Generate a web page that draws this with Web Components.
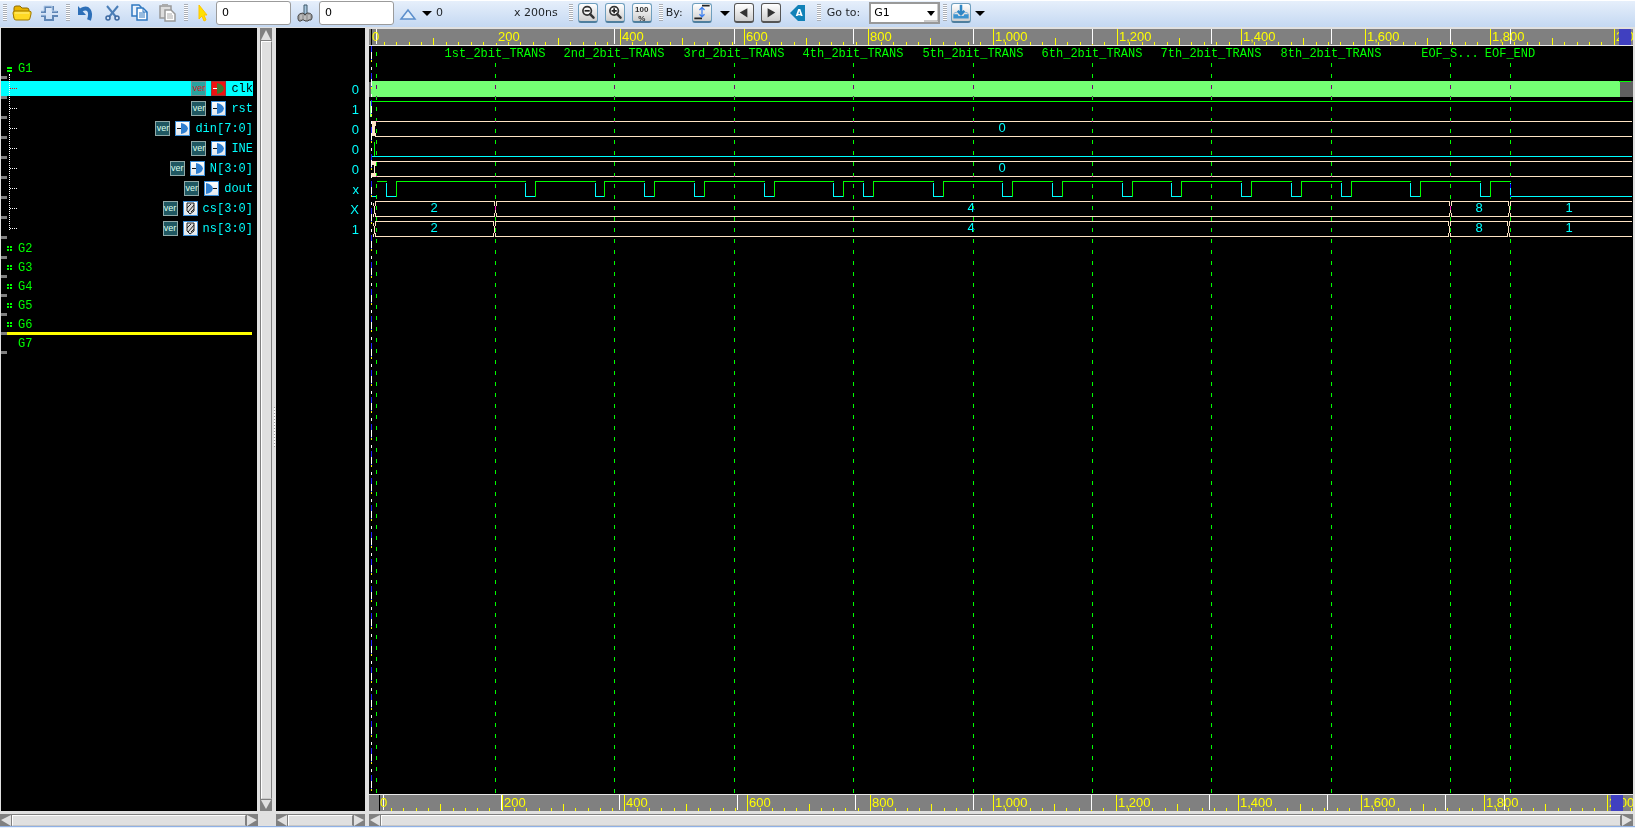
<!DOCTYPE html>
<html lang="en">
<head>
<meta charset="utf-8">
<title>Waveform viewer</title>
<style>
  html, body { margin: 0; height: 100%; }
  body { background: #e0e0e0; font: 11px/16px "DejaVu Sans", sans-serif; color: #1e2226; overflow: hidden; }
</style>
</head>
<body>
<wave-app></wave-app>

<script>
const define = (name, css, html, setup) => {
  customElements.define(name, class extends HTMLElement {
    constructor() {
      super();
      this.attachShadow({ mode: 'open' });
    }
    connectedCallback() {
      const body = typeof html === 'function' ? html(this) : html;
      this.shadowRoot.innerHTML = `<style>*{box-sizing:border-box}${css}</style>${body}`;
      if (setup) setup(this, this.shadowRoot);
    }
  });
};

/* ---------- toolbar icons ---------- */
const glass = extra => `<circle cx="9" cy="8" r="5" fill="#fff" fill-opacity=".6" stroke="#333" stroke-width="2"/><path d="M12.500 12l4 4" stroke="#333" stroke-width="3" stroke-linecap="round"/>${extra}`;
const icons = {
  folder: '<path d="M2 15V5q0-2 2-2h4l2 2h5q2 0 2 2v2" fill="#e8b400" stroke="#8f6a00"/><path d="M1 10q0-2 2-2h14q3 0 2 3l-1 4q0 2-2 2H4q-2 0-2-2z" fill="#ffd924" stroke="#a07800"/><path d="M3 10h14" stroke="#fff08a"/>',
  pulse: '<path d="M2 9h4V4h8v5h5M2 13h4v4h8v-4h5" fill="none" stroke="#5f86b6" stroke-width="2"/><path d="M2 8h3V3h8v5h5M2 12h5" fill="none" stroke="#b9d0ec"/>',
  undo: '<path d="M5 7c7-4 11 1 8 10" fill="none" stroke="#2d6fb8" stroke-width="4"/><path d="M2 3v9h8z" fill="#2d6fb8"/>',
  cut: '<path d="M4 3l9 11M15 3L6 14" stroke="#4c7fb8" stroke-width="2"/><circle cx="5" cy="15" r="2" fill="none" stroke="#3c68a0" stroke-width="1.500"/><circle cx="14" cy="15" r="2" fill="none" stroke="#3c68a0" stroke-width="1.500"/>',
  copy: '<path d="M2 2h7l2 2v9H2z" fill="#e9f2fc" stroke="#2f78c0" stroke-width="1.500"/><path d="M7 5h6l4 4v8H7z" fill="#fff" stroke="#2f78c0" stroke-width="1.500"/><path d="M13 5v4h4M9 10h6M9 12h6M9 14h6" fill="none" stroke="#2f78c0"/>',
  paste: '<path d="M3 3h11v12H3z" fill="#ddd" stroke="#999" stroke-width="1.500"/><path d="M5 1h6v3H5z" fill="#aaa"/><path d="M8 7h6l4 4v7H8z" fill="#fff" stroke="#999" stroke-width="1.500"/><path d="M10 11h5M10 13h6M10 15h6" stroke="#aaa"/>',
  pointer: '<path d="M7 2v14l3-3 2 5 2-1-2-5h3z" fill="#ffe100" stroke="#ffc400"/>',
  brush: '<path d="M9 2h3v9H9z" fill="#a9c8e0" stroke="#3f5868"/><path d="M3 13q1-3 5-3l2 2 2-2q5 0 5 3v2l-1 2h-2l-1 1h-3l-1-1H7l-1 1H4l-1-2z" fill="#a0a0a0" stroke="#484848"/><path d="M6 12v4M10 13v4M14 12v4" stroke="#d6d6d6"/>',
  delta: '<path d="M3 16L10 7l7 9z" fill="#e3effb" stroke="#5c8fcc" stroke-width="1.500"/>',
  down: '<path d="M0 8h10l-5 5z" fill="#000"/>',
  zoomout: glass('<path d="M6 8h6" stroke="#222" stroke-width="2"/>'),
  zoomin: glass('<path d="M6 8h6M9 5v6" stroke="#222" stroke-width="2"/>'),
  by: '<path d="M10 2h9M1 17h9" stroke="#222" stroke-width="2"/><path d="M10 4v11M7 7l3-3 3 3M7 12l3 3 3-3" fill="none" stroke="#3f80f0" stroke-width="1.500"/>',
  prev: '<path d="M14 5v11L5 10z" fill="#333"/>',
  next: '<path d="M6 5v11l9-6z" fill="#333"/>',
  tag: '<path d="M2 10l8-8h7v16h-7z" fill="#1182b8"/>',
  tray: '<path d="M10 1v9M6 8l4 4 4-4" fill="none" stroke="#2e86c4" stroke-width="3"/><path d="M1 12l2-2h2M19 12l-2-2h-2" fill="none" stroke="#69a9d8"/><path d="M1 12h5l1 2h6l1-2h5v5H1z" fill="#3b93cf"/>'
};

define('tool-grip', `
  :host { display: block; flex: none; width: 4px; height: 17px; background: repeating-linear-gradient(#a9aeb6 0 1px, #fff 1px 2px); }
`, '');

define('tool-button', `
  :host { display: block; flex: none; }
  button { display: block; position: relative; width: 20px; height: 20px; padding: 0; border: 0; background: none; font: inherit; color: inherit; }
  :host([slim]) button { width: 10px; }
  :host([framed]) button { border: 1px solid #6f9fbe; border-bottom: 2px solid #4f7f9e; border-radius: 3px; background: linear-gradient(#fff, #cfcfcf); }
  :host([framed][dark]) button { border-color: #555; }
  svg { display: block; width: 100%; height: 100%; }
  slot { display: block; }
  ::slotted(*) { position: absolute; inset: 0; font: bold 8px/9px "Liberation Sans", sans-serif; }
`, el => {
  const slim = el.hasAttribute('slim');
  const icon = icons[el.getAttribute('icon')];
  return `<button type="button" aria-label="${el.getAttribute('label')}">${icon ? `<svg viewBox="0 0 ${slim ? 10 : 20} 20">${icon}</svg>` : ''}<slot></slot></button>`;
});

define('tool-bar', `
  :host { display: flex; align-items: center; height: 27px; padding: 0 3px 2px; background: linear-gradient(#fff 0 1px, #e6effb 1px, #c4d8f2); }
  .set { display: flex; align-items: center; }
  .edit { margin: 0 7px 0 5px; gap: 7px; }
  .clip { margin: 0 7px 0 6px; gap: 7px; }
  .cursor { margin: 0 11px 0 4px; gap: 4px; }
  .zoom { margin: 0 7px 0 5px; gap: 7px; }
  .by { margin: 0 9px 0 3px; gap: 7px; }
  .by span { margin-right: 2px; }
  .by tool-button[slim] { margin: 0 -3px 0 1px; }
  .go { margin: 0 3px 0 6px; gap: 9px; }
  .tray { margin-left: 4px; gap: 4px; }
  input { width: 75px; height: 24px; padding: 0 5px; border: 1px solid #9b9b9b; border-radius: 3px; background: #fff; font: inherit; color: #000; }
  output { width: 74px; }
  select { appearance: none; width: 71px; height: 22px; padding: 0 3px; border: 2px solid #999; background: #fff; font: inherit; color: #000; border-radius: 0; }
  .pick { position: relative; display: flex; }
  .pick svg { position: absolute; right: 2px; top: 2px; width: 14px; height: 18px; pointer-events: none; }
  .hundred { padding-top: 1px; color: #333; }
  .by tool-button .letter { font: bold 9px/20px "DejaVu Sans", sans-serif; color: #fff; margin: 0; padding-left: 3px; }
`, `
  <tool-grip></tool-grip>
  <div class="set edit">
    <tool-button icon="folder" label="Open"></tool-button>
    <tool-button icon="pulse" label="Get signals"></tool-button>
  </div>
  <tool-grip></tool-grip>
  <div class="set clip">
    <tool-button icon="undo" label="Undo"></tool-button>
    <tool-button icon="cut" label="Cut"></tool-button>
    <tool-button icon="copy" label="Copy"></tool-button>
    <tool-button icon="paste" label="Paste"></tool-button>
  </div>
  <tool-grip></tool-grip>
  <div class="set cursor">
    <tool-button icon="pointer" label="Select"></tool-button>
    <input aria-label="Cursor time" value="0">
    <tool-button icon="brush" label="Marker"></tool-button>
    <input aria-label="Marker time" value="0">
    <tool-button icon="delta" label="Delta"></tool-button>
    <tool-button slim icon="down" label="Delta options"></tool-button>
    <output>0</output>
    <span>x 200ns</span>
  </div>
  <tool-grip></tool-grip>
  <div class="set zoom">
    <tool-button framed icon="zoomout" label="Zoom out"></tool-button>
    <tool-button framed icon="zoomin" label="Zoom in"></tool-button>
    <tool-button framed label="Zoom to fit"><span class="hundred">100<br>%</span></tool-button>
  </div>
  <tool-grip></tool-grip>
  <div class="set by">
    <span>By:</span>
    <tool-button framed icon="by" label="Any edge"></tool-button>
    <tool-button slim icon="down" label="Edge options"></tool-button>
    <tool-button framed dark icon="prev" label="Previous edge"></tool-button>
    <tool-button framed dark icon="next" label="Next edge"></tool-button>
    <tool-button icon="tag" label="Annotate"><b class="letter">A</b></tool-button>
  </div>
  <tool-grip></tool-grip>
  <div class="set go">
    <label for="goto">Go to:</label>
    <div class="pick">
      <select id="goto"><option>G1</option><option>G2</option><option>G3</option><option>G4</option><option>G5</option><option>G6</option><option>G7</option></select>
      <svg viewBox="0 0 14 18"><path d="M3 7h8l-4 5z"/><path d="M0 17h14V0" fill="none" stroke="#999"/></svg>
    </div>
  </div>
  <tool-grip></tool-grip>
  <div class="set tray">
    <tool-button framed icon="tray" label="Dump"></tool-button>
    <tool-button slim icon="down" label="Dump options"></tool-button>
  </div>
`);

/* ---------- motif-style scrollbar ---------- */
define('scroll-track', `
  :host { display: flex; flex: none; height: 12px; background: #808080; border-top: 1px solid #808080; }
  :host([vertical]) { flex-direction: column; width: 12px; height: auto; border-left: 1px solid #808080; }
  svg { flex: none; width: 12px; height: 11px; display: block; }
  :host([vertical]) svg { width: 10px; height: 12px; }
  i { flex: 1; background: #e0e0e0; border: 1px solid #fff; border-right-color: #808080; border-bottom-color: #c8c8c8; }
`, el => el.hasAttribute('vertical')
  ? `<svg viewBox="0 0 10 12"><path d="M5 1l5 10H0z" fill="#e0e0e0"/></svg><i></i><svg viewBox="0 0 10 12"><path d="M5 10L10 1H0z" fill="#e0e0e0"/></svg>`
  : `<svg viewBox="0 0 12 11"><path d="M1 5l10-5v11z" fill="#e0e0e0"/></svg><i></i><svg viewBox="0 0 12 11"><path d="M11 5L1 0v11z" fill="#e0e0e0"/></svg>`);

/* ---------- signal list ---------- */
const ports = {
  in: '<path d="M2 7.500h5" stroke="#111"/><path d="M6 2q6 1 7 5.500-1 4.500-7 5.500z" fill="#2f7fd0"/>',
  out: '<path d="M9 7.500h4" stroke="#111"/><path d="M2 2q6 1 7 5.500-1 4.500-7 5.500z" fill="#2f7fd0"/>',
  reg: '<path d="M4 2v8l3 3 4-3V2z" fill="#ddd" stroke="#222"/><path d="M4 7l4-4M5 11l6-7M8 11l3-3" stroke="#222"/>'
};

define('signal-row', `
  :host { display: block; position: relative; height: 20px; padding: 2px 4px 3px 0; font: 12px/16px "Liberation Mono", monospace; color: #0ff; }
  .bar { display: flex; justify-content: flex-end; align-items: center; height: 15px; }
  .lang { width: 15px; height: 15px; border: 1px solid #8fa9a8; background: #1f5761; color: #dfe; font: 9px/12px "Liberation Sans", sans-serif; display: flex; justify-content: center; }
  svg { width: 15px; height: 15px; margin: 0 5px; background: linear-gradient(#fff, #dfe6ec); box-shadow: inset 0 0 0 1px #3d8fd8; }
  .branch { position: absolute; left: 9px; top: 9px; width: 7px; border-top: 1px dotted #fff; }
  .edge { position: absolute; left: 0; bottom: 0; width: 6px; height: 3px; background: #808080; }
  :host([selected]) .bar { background: #0ff; color: #000; }
  :host([selected]) .lang { background: #2aa2a0; border-color: #7c8c90; color: #d82020; }
  :host([selected]) svg { background: #f01010; box-shadow: inset 0 0 0 1px #a03030; }
  :host([selected]) svg path { stroke: #fff; }
  :host([selected]) svg path + path { stroke: none; fill: #3c7a30; }
  :host([selected]) .branch { border-color: #f00; }
`, el => `<div class="bar"><span class="lang">ver</span><svg viewBox="0 0 15 15">${ports[el.getAttribute('port')]}</svg><span><slot></slot></span></div><i class="branch"></i><i class="edge"></i>`);

define('group-row', `
  :host { display: flex; align-items: center; position: relative; height: 19px; padding-left: 6px; gap: 6px; font: 12px/16px "Liberation Mono", monospace; color: #0f0; }
  :host([open]) { height: 20px; }
  .mark { width: 5px; height: 5px; background: linear-gradient(90deg, #0f0 0 2px, #000 2px 3px, #0f0 3px); position: relative; }
  .mark::after { content: ""; position: absolute; left: 0; top: 2px; width: 5px; height: 1px; background: #000; }
  :host([open]) .mark { background: #0f0; }
  :host([empty]) .mark { background: none; }
  :host([drop])::after { content: ""; position: absolute; left: 6px; right: 5px; bottom: -1px; height: 3px; background: #ff0; }
  .edge { position: absolute; left: 0; bottom: -1px; width: 6px; height: 3px; background: #808080; }
  :host([open]) .edge { bottom: 0; }
`, `<i class="mark"></i><slot></slot><i class="edge"></i>`);

define('signal-list', `
  :host { display: block; position: relative; flex: 1; padding-top: 31px; background: #000; overflow: hidden; }
  .tree { position: absolute; left: 8px; top: 46px; height: 156px; border-left: 1px dotted #fff; z-index: 1; }
`, `
  <group-row open>G1</group-row>
  <signal-row port="in" selected>clk</signal-row>
  <signal-row port="in">rst</signal-row>
  <signal-row port="in">din[7:0]</signal-row>
  <signal-row port="in">INE</signal-row>
  <signal-row port="in">N[3:0]</signal-row>
  <signal-row port="out">dout</signal-row>
  <signal-row port="reg">cs[3:0]</signal-row>
  <signal-row port="reg">ns[3:0]</signal-row>
  <group-row>G2</group-row>
  <group-row>G3</group-row>
  <group-row>G4</group-row>
  <group-row>G5</group-row>
  <group-row drop>G6</group-row>
  <group-row empty>G7</group-row>
  <i class="tree"></i>
`);

define('value-list', `
  :host { display: block; flex: 1; padding: 51px 6px 0 0; background: #000; color: #0ff; text-align: right; font: 13px/22px "Liberation Sans", sans-serif; }
  div { height: 20px; }
`, ['0', '1', '0', '0', '0', 'x', 'X', '1'].map(v => `<div>${v}</div>`).join(''));

/* ---------- waveforms ---------- */
const START = -4.5, END = 2030;
const MARKERS = [
  [7, ''], [199, '1st_2bit_TRANS'], [391, '2nd_2bit_TRANS'], [584, '3rd_2bit_TRANS'],
  [775, '4th_2bit_TRANS'], [968, '5th_2bit_TRANS'], [1160, '6th_2bit_TRANS'],
  [1352, '7th_2bit_TRANS'], [1545, '8th_2bit_TRANS'], [1736, 'EOF_S...'], [1833, 'EOF_END']
];
const DOUT = [24, 40, 247, 264, 360, 375, 439, 455, 520, 536, 632, 648, 743, 760, 792, 808, 904, 920, 1015, 1032,
  1096, 1112, 1209, 1225, 1287, 1304, 1400, 1416, 1481, 1497, 1561, 1577, 1672, 1688, 1785, 1801, 1833];

const redraw = (el, root, paint) => {
  const svg = root.querySelector('svg');
  const draw = () => { svg.innerHTML = paint(el.clientWidth); };
  draw();
  new ResizeObserver(draw).observe(el);
};
const box = (x, y, w, h, fill, extra = '') => `<rect x="${x}" y="${y}" width="${w}" height="${h}" fill="${fill}" ${extra}/>`;

define('time-ruler', `
  :host { display: block; flex: none; height: 17px; background: #808080; border-bottom: 1px solid #e8e8e8; overflow: hidden; }
  :host([foot]) { border-bottom: 0; border-top: 1px solid #e8e8e8; }
  svg { display: block; width: 100%; height: 16px; shape-rendering: crispEdges; }
  text { font: 13px "Liberation Sans", sans-serif; fill: #ff0; }
`, '<svg></svg>', (el, root) => {
  const from = +el.getAttribute('from'), to = +el.getAttribute('to');
  redraw(el, root, width => {
    const at = t => Math.floor((t - from) / (to - from) * width);
    let out = box(at(0), 0, 1, 16, '#000');
    for (let t = 20; t < to; t += 20) {
      const tall = t % 200 === 0 ? 16 : t % 100 === 0 ? 7 : 3;
      out += box(at(t), 16 - tall, 1, tall, '#ff0');
    }
    out += MARKERS.map(([t]) => t === 199 && !el.hasAttribute('foot')
      ? box(at(t), 0, 2, 14, '#808080')
      : box(at(t), 0, 1, 15, '#fff')).join('');
    out += `<text x="${at(0) + 1}" y="12">0</text>`;
    for (let t = 200; t < to; t += 200) out += `<text x="${at(t) + 2}" y="12">${t.toLocaleString('en-US')}</text>`;
    return out + box(at(2020) - (el.hasAttribute('foot') ? 8 : 7), 0, 12, 16, '#4040c0');
  });
});

define('wave-canvas', `
  :host { display: block; flex: 1; min-height: 0; background: #000; overflow: hidden; }
  svg { display: block; width: 100%; height: 100%; shape-rendering: crispEdges; }
  text { text-anchor: middle; fill: #0ff; font: 13px "Liberation Sans", sans-serif; }
  text.name { fill: #0f0; font: 12px "Liberation Mono", monospace; }
  .diff { mix-blend-mode: difference; }
  path { fill: none; stroke-width: 1; }
`, '<svg></svg>', (el, root) => redraw(el, root, width => {
  const at = t => Math.floor((t - START) / (END - START) * width);
  const right = width - 2, peach = '#ffe4c4';
  const line = (d, colour) => `<path transform="translate(.5 .5)" d="${d}" stroke="${colour}"/>`;
  const bus = (y, stops, labels) => {
    let d = '', from = 6;
    stops.concat(null).forEach(s => {
      const last = s === null;
      const end = last ? right : at(s);
      d += `M${from} ${y + 4}V${y}H${end - (last ? 0 : 1)}V${y + (last ? 0 : 4)}M${from} ${y + 11}V${y + 15}H${end - (last ? 0 : 1)}V${y + (last ? 15 : 11)}`;
      if (!last) d += `M${end} ${y + 4}V${y + 11}`;
      from = end + 1;
    });
    return line(d, peach) + labels.map(([t, v]) => `<text x="${at(t)}" y="${y + 11}">${v}</text>`).join('');
  };
  let out = '';
  // clk: cycles too dense to resolve are drawn as a solid band
  out += box(0, 36, 2, 15, '#606060') + box(2, 35, width - 15, 16, '#74ff74');
  out += box(width - 13, 35, 13, 16, '#606060') + box(width - 14, 35, 12, 1, '#0f0');
  // rst
  out += box(1, 55, 2, 16, '#74ff74') + line(`M2 55H${right}`, '#0f0');
  // din
  out += bus(75, [], [[1015, '0']]) + box(3, 75, 3, 15, peach);
  // INE
  out += line('M5 95V110', '#0f0') + line(`M2 110H${right}`, '#0ff');
  // N
  out += bus(115, [], [[1015, '0']]) + box(2, 115, 4, 4, peach) + box(2, 127, 4, 4, peach) + box(5, 119, 1, 8, peach);
  // dout
  let high = `M${at(7)} 135`, low = `M2 150H${at(7) - 1}`;
  DOUT.forEach((t, i) => {
    const x = at(t);
    if (i % 2 === 0) { high += `H${x}`; low += `M${x} 136V150`; }
    else { low += `H${x - 1}`; high += `M${x} 150V135`; }
  });
  low += `H${right}`;
  out += line(low, '#0ff') + line(high, '#0f0');
  // state registers
  const state = [[101, '2'], [966, '4'], [1783, '8'], [1927, '1']];
  out += bus(155, [199, 1736, 1832], state) + line('M4 156V159M4 167V170M5 159V167', peach);
  out += bus(175, [198, 1734, 1829], state) + line('M4 176V179M4 187V190M5 179V187', peach);
  // markers, with the dash running down from the names
  out += MARKERS.map(([t, name]) => {
    const x = at(t) + .5;
    return `<line class="diff" x1="${x}" x2="${x}" y1="${name ? 17 : -5}" y2="100%" stroke="#0f0" stroke-dasharray="4 7"/>` +
      (name ? `<text class="name" x="${at(t)}" y="11">${name}</text>` : '');
  }).join('');
  out += '<line x1="2.500" x2="2.500" y1="0" y2="100%" stroke="#22f" stroke-dasharray="6 5 4 12"/>';
  out += '<line x1="2.500" x2="2.500" y1="6" y2="100%" stroke="#fff" stroke-dasharray="7 8 3 9"/>';
  out += '<line x1="2.500" x2="2.500" y1="14" y2="100%" stroke="#ff0" stroke-dasharray="2 25"/>';
  return out;
}));

/* ---------- shell ---------- */
define('wave-app', `
  :host { display: flex; flex-direction: column; height: 100vh; }
  main { flex: 1; min-height: 0; display: flex; padding: 1px 2px 0 0; background: #e0e0e0; }
  section { display: flex; flex-direction: column; min-height: 0; gap: 3px; }
  .names { width: 258px; }
  .names signal-list { margin: 0 1px; }
  .side { display: flex; padding: 0 2px 15px 2px; }
  .split { align-self: center; width: 1px; height: 40px; margin-right: 1px; background: repeating-linear-gradient(#999 0 1px, #fff 1px 3px); }
  .values { width: 89px; margin-right: 4px; }
  .waves { flex: 1; min-width: 0; }
  .view { flex: 1; min-height: 0; display: flex; flex-direction: column; padding-top: 1px; }
  footer { height: 2px; background: #e8f0fa; border-top: 1px solid #8fb0e4; }
`, `
  <tool-bar></tool-bar>
  <main>
    <section class="names"><signal-list></signal-list><scroll-track></scroll-track></section>
    <div class="side"><scroll-track vertical></scroll-track></div>
    <i class="split"></i>
    <section class="values"><value-list></value-list><scroll-track></scroll-track></section>
    <section class="waves">
      <div class="view">
        <time-ruler from="-4.500" to="2030"></time-ruler>
        <wave-canvas></wave-canvas>
        <time-ruler foot from="-17" to="2042"></time-ruler>
      </div>
      <scroll-track></scroll-track>
    </section>
  </main>
  <footer></footer>
`);
</script>
</body>
</html>
